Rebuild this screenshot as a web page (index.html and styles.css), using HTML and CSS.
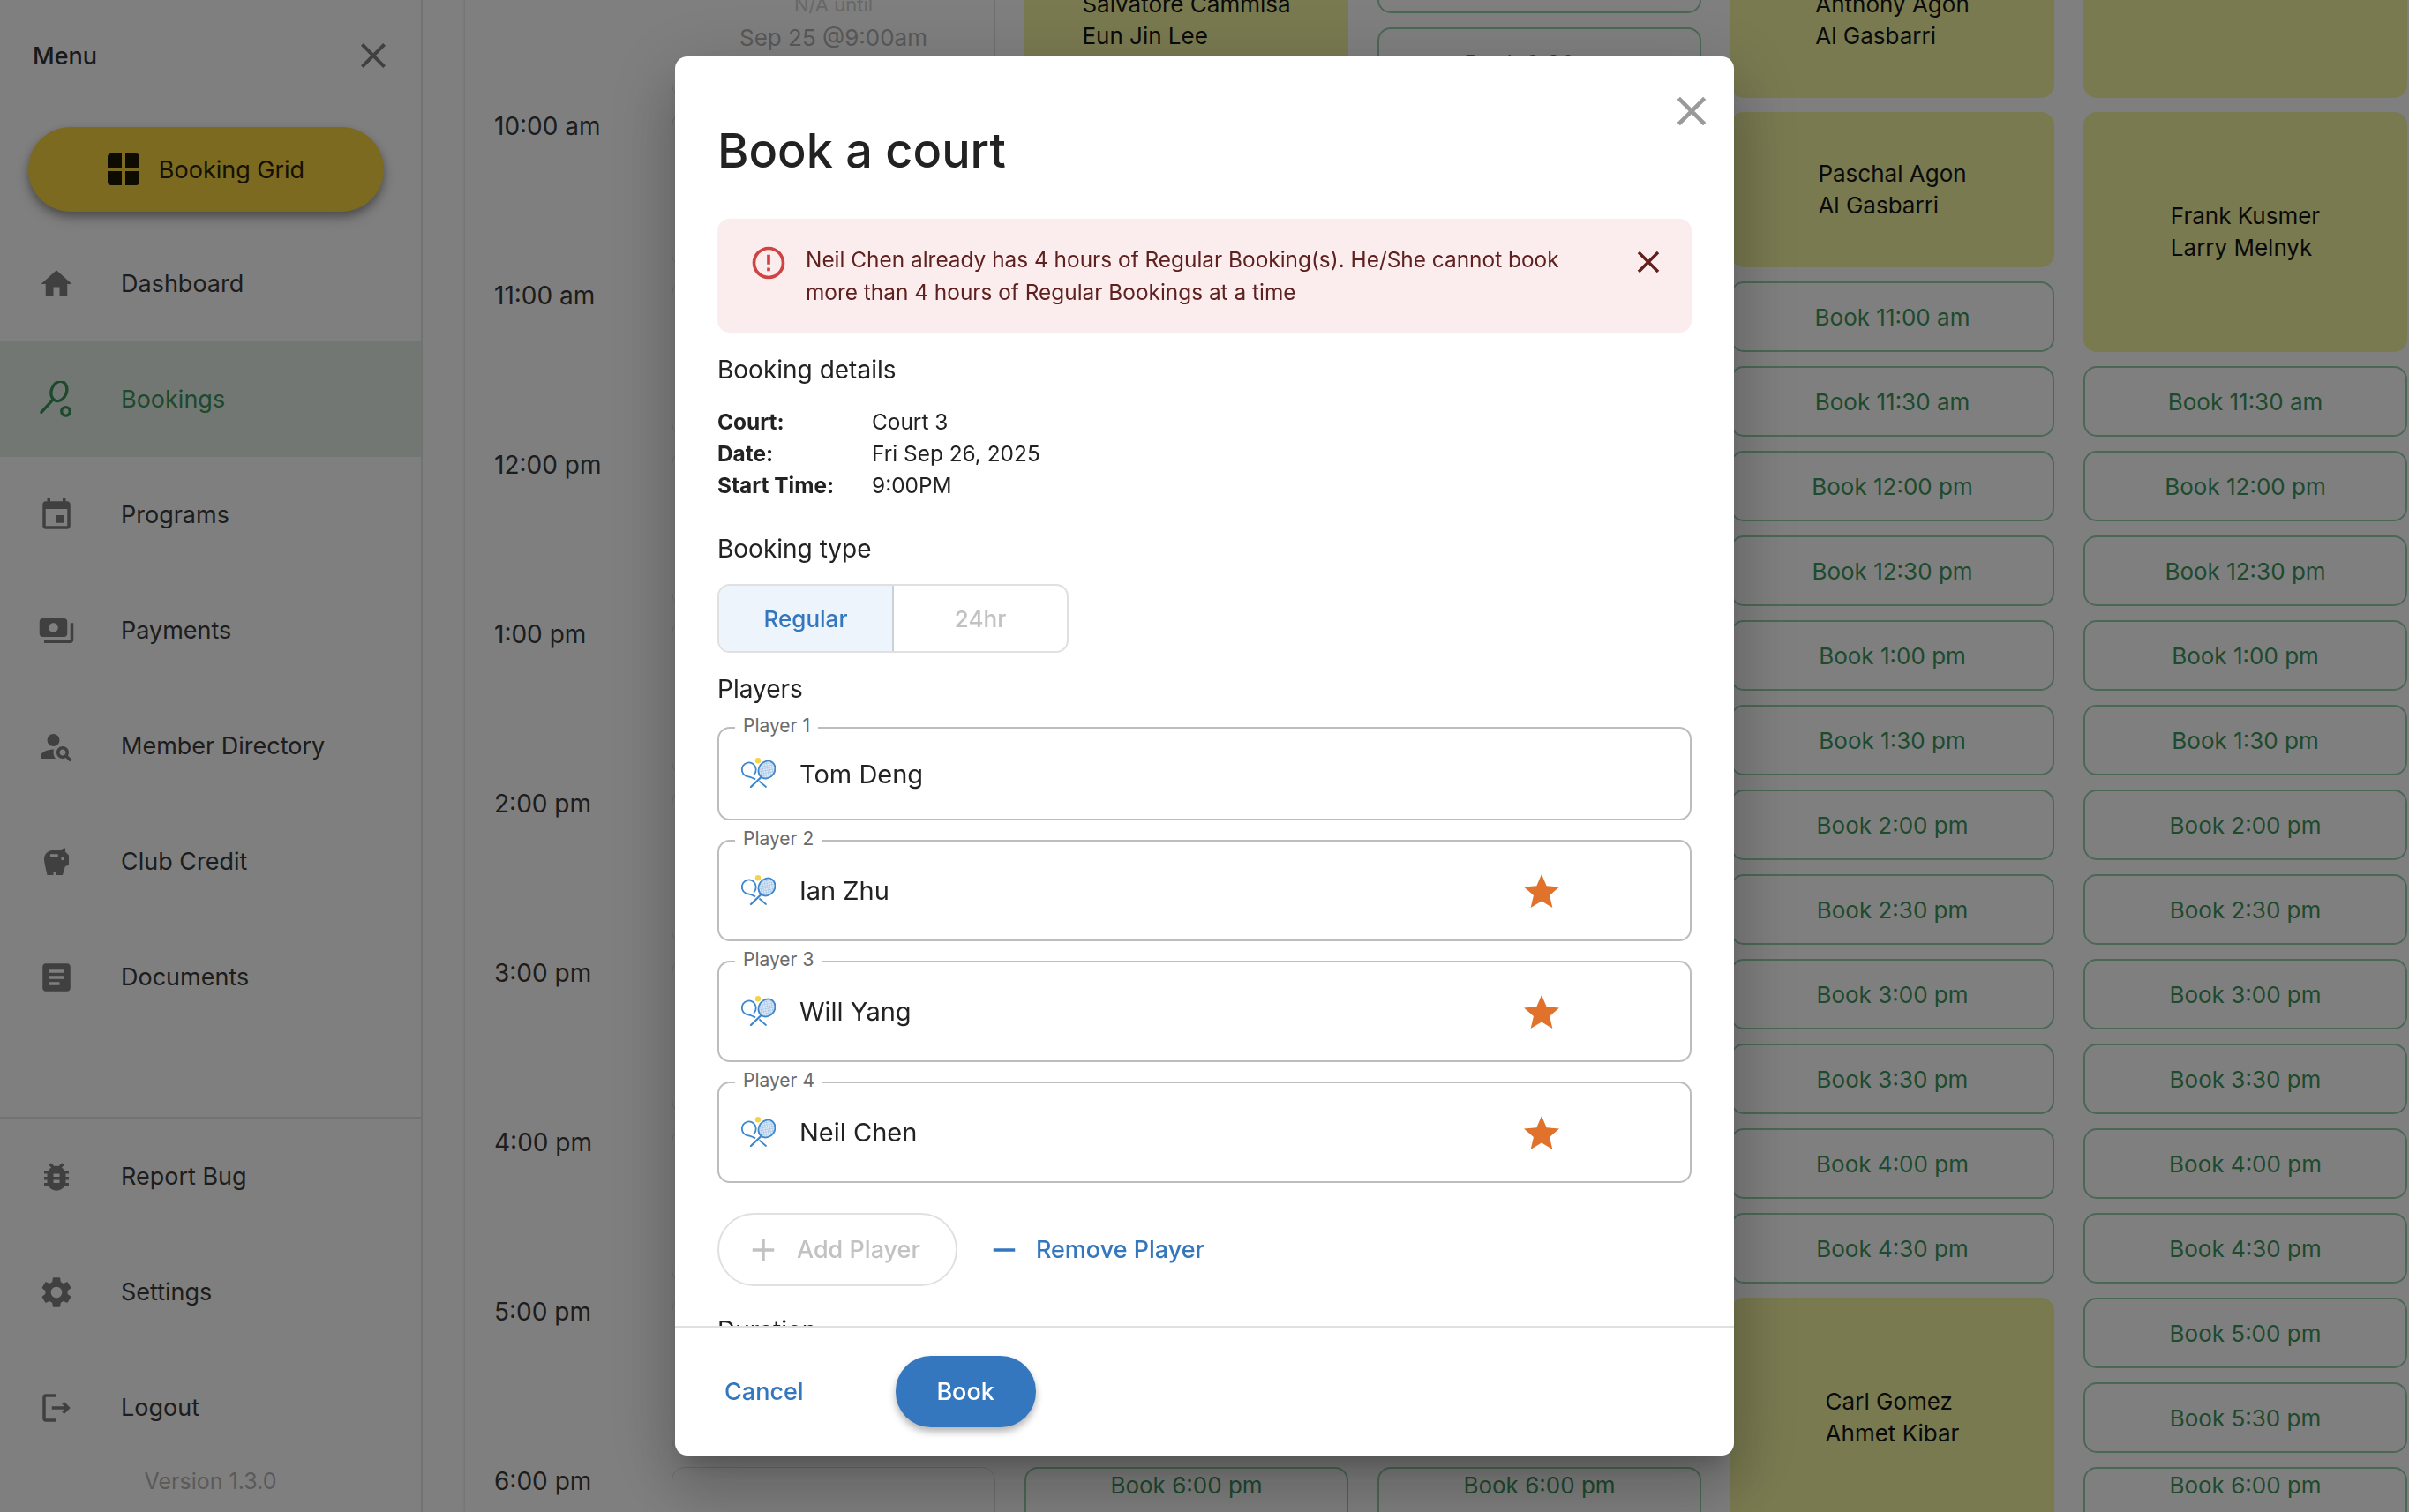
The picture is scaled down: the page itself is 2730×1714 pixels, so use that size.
FILE: index.html
```html
<!DOCTYPE html>
<html lang="en">
  <head>
    <meta charset="utf-8" />
    <title>Book a court</title>
    <link rel="stylesheet" href="styles.css">
  </head>
  <body>
    <div class="page">
      <aside class="sidebar">
        <div class="sidebarHead">
          <span class="menuTitle">Menu</span>
          <svg class="closeIcon" viewBox="0 0 24 24"><path d="M19 6.41 17.59 5 12 10.59 6.41 5 5 6.41 10.59 12 5 17.59 6.41 19 12 13.41 17.59 19 19 17.59 13.41 12z"/></svg>
        </div>
        <a class="gridButton">
          <svg class="gridIcon" viewBox="0 0 36 36"><path d="M4 0h12v16H0V4a4 4 0 0 1 4-4zM20 0h12a4 4 0 0 1 4 4v12H20zM0 20h16v16H4a4 4 0 0 1-4-4zM20 20h16v12a4 4 0 0 1-4 4H20z"/></svg>
          Booking Grid
        </a>
        <nav class="nav">
          <a class="navItem">
            <svg viewBox="0 0 24 24"><path d="M10 20v-6h4v6h5v-8h3L12 3 2 12h3v8z"/></svg>
            Dashboard
          </a>
          <a class="navItem active">
            <svg viewBox="0 0 40 44"><g fill="none" stroke="currentColor" stroke-width="3.5" stroke-linecap="round"><ellipse cx="23" cy="12" rx="9" ry="12" transform="rotate(20 23 12)"/><path d="M15 23 2 37"/><circle cx="31" cy="36" r="5"/></g></svg>
            Bookings
          </a>
          <a class="navItem">
            <svg viewBox="0 0 24 24"><path d="M17 12h-5v5h5v-5zM16 1v2H8V1H6v2H5c-1.11 0-1.99.9-1.99 2L3 19c0 1.1.89 2 2 2h14c1.1 0 2-.9 2-2V5c0-1.1-.9-2-2-2h-1V1h-2zm3 18H5V8h14v11z"/></svg>
            Programs
          </a>
          <a class="navItem">
            <svg viewBox="0 0 24 24"><path d="M19 14V6c0-1.1-.9-2-2-2H3c-1.1 0-2 .9-2 2v8c0 1.1.9 2 2 2h14c1.1 0 2-.9 2-2zm-9-1c-1.66 0-3-1.34-3-3s1.34-3 3-3 3 1.34 3 3-1.34 3-3 3zm13-6v11c0 1.1-.9 2-2 2H4v-2h17V7h2z"/></svg>
            Payments
          </a>
          <a class="navItem">
            <svg viewBox="0 0 24 24"><path d="M10 12a4 4 0 1 0 0-8 4 4 0 0 0 0 8zM10.35 14.01C7.62 13.91 2 15.27 2 18v2h9.54c-2.47-2.76-1.23-5.89-1.19-5.99zM19.43 18.02c.36-.59.57-1.28.57-2.02 0-2.21-1.79-4-4-4s-4 1.79-4 4 1.79 4 4 4c.74 0 1.43-.22 2.02-.57L20.59 22 22 20.59c-1.5-1.5-.79-.8-2.57-2.57zM16 18c-1.1 0-2-.9-2-2s.9-2 2-2 2 .9 2 2-.9 2-2 2z"/></svg>
            Member Directory
          </a>
          <a class="navItem">
            <svg viewBox="0 0 24 24"><path d="M19.83 7.5l-2.27-2.27c.07-.42.18-.81.32-1.15.11-.26.04-.56-.15-.75-.19-.19-.48-.26-.74-.15-.99.4-1.96.82-2.27 1.32H9.5C6.46 4.5 4 6.96 4 10c0 2.5 1.37 7.5 2 10.5h4v-2h2v2h4l1.68-5.59 2.32-.77V7.5h-.17zM13 9H8V7h5v2zm3 2c-.55 0-1-.45-1-1s.45-1 1-1 1 .45 1 1-.45 1-1 1z"/></svg>
            Club Credit
          </a>
          <a class="navItem">
            <svg viewBox="0 0 24 24"><path d="M19 3H5c-1.1 0-2 .9-2 2v14c0 1.1.9 2 2 2h14c1.1 0 2-.9 2-2V5c0-1.1-.9-2-2-2zm-5 14H7v-2h7v2zm3-4H7v-2h10v2zm0-4H7V7h10v2z"/></svg>
            Documents
          </a>
        </nav>
        <div class="sidebarFoot">
          <a class="navItem">
            <svg viewBox="0 0 24 24"><path d="M20 8h-2.81c-.45-.78-1.07-1.45-1.82-1.96L17 4.41 15.59 3l-2.17 2.17C12.96 5.06 12.49 5 12 5c-.49 0-.96.06-1.41.17L8.41 3 7 4.41l1.62 1.63C7.88 6.55 7.26 7.22 6.81 8H4v2h2.09c-.05.33-.09.66-.09 1v1H4v2h2v1c0 .34.04.67.09 1H4v2h2.81c1.04 1.79 2.97 3 5.19 3s4.15-1.21 5.19-3H20v-2h-2.09c.05-.33.09-.66.09-1v-1h2v-2h-2v-1c0-.34-.04-.67-.09-1H20V8zm-6 8h-4v-2h4v2zm0-4h-4v-2h4v2z"/></svg>
            Report Bug
          </a>
          <a class="navItem">
            <svg viewBox="0 0 24 24"><path d="M19.14 12.94c.04-.3.06-.61.06-.94 0-.32-.02-.64-.07-.94l2.03-1.58c.18-.14.23-.41.12-.61l-1.92-3.32c-.12-.22-.37-.29-.59-.22l-2.39.96c-.5-.38-1.03-.7-1.62-.94l-.36-2.54c-.04-.24-.24-.41-.48-.41h-3.84c-.24 0-.43.17-.47.41l-.36 2.54c-.59.24-1.13.57-1.62.94l-2.39-.96c-.22-.08-.47 0-.59.22L2.74 8.87c-.12.21-.08.47.12.61l2.03 1.58c-.05.3-.09.63-.09.94s.02.64.07.94l-2.03 1.58c-.18.14-.23.41-.12.61l1.92 3.32c.12.22.37.29.59.22l2.39-.96c.5.38 1.03.7 1.62.94l.36 2.54c.05.24.24.41.48.41h3.84c.24 0 .44-.17.47-.41l.36-2.54c.59-.24 1.13-.56 1.62-.94l2.39.96c.22.08.47 0 .59-.22l1.92-3.32c.12-.22.07-.47-.12-.61l-2.01-1.58zM12 15.6c-1.98 0-3.6-1.62-3.6-3.6s1.62-3.6 3.6-3.6 3.6 1.62 3.6 3.6-1.62 3.6-3.6 3.6z"/></svg>
            Settings
          </a>
          <a class="navItem">
            <svg viewBox="0 0 24 24"><path d="M17 8l-1.41 1.41L17.17 11H9v2h8.17l-1.58 1.58L17 16l4-4-4-4zM5 5h7V3H5c-1.1 0-2 .9-2 2v14c0 1.1.9 2 2 2h7v-2H5V5z"/></svg>
            Logout
          </a>
          <div class="version">Version 1.3.0</div>
        </div>
      </aside>

      <main class="schedule">
        <div class="times">
          <div class="time">9:00 am</div>
          <div class="time">10:00 am</div>
          <div class="time">11:00 am</div>
          <div class="time">12:00 pm</div>
          <div class="time">1:00 pm</div>
          <div class="time">2:00 pm</div>
          <div class="time">3:00 pm</div>
          <div class="time">4:00 pm</div>
          <div class="time">5:00 pm</div>
          <div class="time">6:00 pm</div>
        </div>

        <div class="court">
          <div class="closed span2"><div><span class="closedNote">N/A until</span><br />Sep 25 @9:00am</div></div>
          <div class="closed span2"></div>
          <div class="closed span2"></div>
          <div class="closed span2"></div>
          <div class="closed span2"></div>
          <div class="closed span2"></div>
          <div class="closed span2"></div>
          <div class="closed span2"></div>
          <div class="closed span2"></div>
          <div class="closed span2"></div>
        </div>

        <div class="court">
          <div class="booked span2"><div>Salvatore Cammisa<br />Eun Jin Lee</div></div>
          <div class="covered"></div>
          <a class="slot last">Book 6:00 pm</a>
        </div>

        <div class="court">
          <a class="slot">Book 9:00 am</a>
          <a class="slot">Book 9:30 am</a>
          <div class="covered"></div>
          <a class="slot last">Book 6:00 pm</a>
        </div>

        <div class="court">
          <div class="booked span2"><div>Anthony Agon<br />Al Gasbarri</div></div>
          <div class="booked span2"><div>Paschal Agon<br />Al Gasbarri</div></div>
          <a class="slot">Book 11:00 am</a>
          <a class="slot">Book 11:30 am</a>
          <a class="slot">Book 12:00 pm</a>
          <a class="slot">Book 12:30 pm</a>
          <a class="slot">Book 1:00 pm</a>
          <a class="slot">Book 1:30 pm</a>
          <a class="slot">Book 2:00 pm</a>
          <a class="slot">Book 2:30 pm</a>
          <a class="slot">Book 3:00 pm</a>
          <a class="slot">Book 3:30 pm</a>
          <a class="slot">Book 4:00 pm</a>
          <a class="slot">Book 4:30 pm</a>
          <div class="booked span3"><div>Carl Gomez<br />Ahmet Kibar</div></div>
        </div>

        <div class="court">
          <div class="booked span2"></div>
          <div class="booked span3"><div>Frank Kusmer<br />Larry Melnyk</div></div>
          <a class="slot">Book 11:30 am</a>
          <a class="slot">Book 12:00 pm</a>
          <a class="slot">Book 12:30 pm</a>
          <a class="slot">Book 1:00 pm</a>
          <a class="slot">Book 1:30 pm</a>
          <a class="slot">Book 2:00 pm</a>
          <a class="slot">Book 2:30 pm</a>
          <a class="slot">Book 3:00 pm</a>
          <a class="slot">Book 3:30 pm</a>
          <a class="slot">Book 4:00 pm</a>
          <a class="slot">Book 4:30 pm</a>
          <a class="slot">Book 5:00 pm</a>
          <a class="slot">Book 5:30 pm</a>
          <a class="slot last">Book 6:00 pm</a>
        </div>
      </main>
    </div>

    <div class="overlay">
      <div class="modal">
        <svg class="modalClose" viewBox="0 0 24 24"><path d="M19 6.41 17.59 5 12 10.59 6.41 5 5 6.41 10.59 12 5 17.59 6.41 19 12 13.41 17.59 19 19 17.59 13.41 12z"/></svg>
        <div class="modalBody">
          <h1>Book a court</h1>

          <div class="alert">
            <svg class="alertIcon" viewBox="0 0 24 24"><path d="M11 15h2v2h-2zm0-8h2v6h-2zm.99-5C6.47 2 2 6.48 2 12s4.47 10 9.99 10C17.52 22 22 17.52 22 12S17.52 2 11.99 2zM12 20c-4.42 0-8-3.58-8-8s3.58-8 8-8 8 3.58 8 8-3.58 8-8 8z"/></svg>
            <p>Neil Chen already has 4 hours of Regular Booking(s). He/She cannot book more than 4 hours of Regular Bookings at a time</p>
            <svg class="alertClose" viewBox="0 0 24 24"><path d="M19 6.41 17.59 5 12 10.59 6.41 5 5 6.41 10.59 12 5 17.59 6.41 19 12 13.41 17.59 19 19 17.59 13.41 12z"/></svg>
          </div>

          <h2 class="detailsHead">Booking details</h2>
          <dl class="details">
            <dt>Court:</dt><dd>Court 3</dd>
            <dt>Date:</dt><dd>Fri Sep 26, 2025</dd>
            <dt>Start Time:</dt><dd>9:00PM</dd>
          </dl>

          <h2 class="typeHead">Booking type</h2>
          <div class="toggle">
            <span class="toggleItem selected">Regular</span>
            <span class="toggleItem">24hr</span>
          </div>

          <h2 class="playersHead">Players</h2>
          <div class="players">
            <div class="player first">
              <span class="playerLabel">Player 1</span>
              <svg class="racketIcon" viewBox="0 0 40 36"><use href="#rackets" /></svg>
              <span class="playerName">Tom Deng</span>
            </div>
            <div class="player">
              <span class="playerLabel">Player 2</span>
              <svg class="racketIcon" viewBox="0 0 40 36"><use href="#rackets" /></svg>
              <span class="playerName">Ian Zhu</span>
              <svg class="star" viewBox="2 2 20 19"><path d="M12 17.27 18.18 21l-1.64-7.03L22 9.24l-7.19-.61L12 2 9.19 8.63 2 9.24l5.46 4.73L5.82 21z"/></svg>
            </div>
            <div class="player">
              <span class="playerLabel">Player 3</span>
              <svg class="racketIcon" viewBox="0 0 40 36"><use href="#rackets" /></svg>
              <span class="playerName">Will Yang</span>
              <svg class="star" viewBox="2 2 20 19"><path d="M12 17.27 18.18 21l-1.64-7.03L22 9.24l-7.19-.61L12 2 9.19 8.63 2 9.24l5.46 4.73L5.82 21z"/></svg>
            </div>
            <div class="player">
              <span class="playerLabel">Player 4</span>
              <svg class="racketIcon" viewBox="0 0 40 36"><use href="#rackets" /></svg>
              <span class="playerName">Neil Chen</span>
              <svg class="star" viewBox="2 2 20 19"><path d="M12 17.27 18.18 21l-1.64-7.03L22 9.24l-7.19-.61L12 2 9.19 8.63 2 9.24l5.46 4.73L5.82 21z"/></svg>
            </div>
          </div>

          <div class="playerActions">
            <span class="addPlayer">
              <svg viewBox="0 0 24 24"><path d="M19 13h-6v6h-2v-6H5v-2h6V5h2v6h6v2z"/></svg>
              Add Player
            </span>
            <span class="removePlayer">
              <svg viewBox="0 0 24 24"><path d="M19 13H5v-2h14v2z"/></svg>
              Remove Player
            </span>
          </div>

          <h2 class="durationHead">Duration</h2>
        </div>
        <div class="modalFoot">
          <a class="cancel">Cancel</a>
          <a class="book">Book</a>
        </div>
      </div>
    </div>

    <svg class="defs" width="0" height="0">
      <defs>
        <pattern id="mesh" width="2.6" height="2.6" patternUnits="userSpaceOnUse" patternTransform="rotate(45)">
          <rect width="2.6" height="2.6" fill="#dbe8f5" />
          <path d="M0 0h2.6M0 0v2.6" stroke="#8db6df" stroke-width=".8" />
        </pattern>
        <g id="rackets">
          <path d="M22 27l7 6M15.500 19A8 8 0 1 0 6 20.500" fill="none" stroke="#3f87cc" stroke-width="1.800" stroke-linecap="round" />
          <path d="M6 20.500C10 21.500 14 22 17 24.500" fill="none" stroke="#3f87cc" stroke-width="1.800" />
          <ellipse cx="30" cy="13.500" rx="9" ry="10.500" transform="rotate(35 30 13.500)" fill="url(#mesh)" stroke="#3f87cc" stroke-width="1.800" />
          <path d="M23.500 22 12 33" fill="none" stroke="#3f87cc" stroke-width="2.400" stroke-linecap="round" />
          <circle cx="20" cy="3.300" r="3.200" fill="#f5d24a" />
        </g>
      </defs>
    </svg>
  </body>
</html>
```

FILE: styles.css
```css
html,
body {
  margin: 0px;
  height: 100%;
  overflow: hidden;
  background-color: #ffffff;
  font-family: "Inter", "Noto Sans", sans-serif;
  color: #333333;
}
a {
  text-decoration: none;
}
h1,
h2,
p,
dl,
dd {
  margin: 0px;
}
.defs {
  display: block;
  height: 0px;
}
.page {
  display: flex;
  height: 1714px;
}

/* sidebar */
.sidebar {
  width: 477px;
  flex: none;
  display: flex;
  flex-direction: column;
  border-right: 2px solid #e4e4e4;
  font-size: 27px;
}
.sidebarHead {
  height: 126px;
  flex: none;
  display: flex;
  align-items: center;
  justify-content: space-between;
  padding: 0px 30px 0px 37px;
}
.menuTitle {
  font-weight: 500;
}
.closeIcon {
  width: 48px;
  height: 48px;
  fill: #808080;
}
.gridButton {
  width: 403px;
  height: 96px;
  flex: none;
  margin: 18px 0px 16px 32px;
  display: flex;
  align-items: center;
  justify-content: center;
  gap: 22px;
  border-radius: 48px;
  background-color: #f6d440;
  color: #2a2204;
  box-shadow: 0px 5px 10px rgba(0, 0, 0, 0.3), 0px 8px 18px rgba(0, 0, 0, 0.16);
}
.gridIcon {
  width: 36px;
  height: 36px;
  fill: #1c1600;
}
.navItem {
  height: 131px;
  display: flex;
  align-items: center;
  gap: 52px;
  padding-left: 43px;
  color: #3a3a3a;
}
.navItem svg {
  width: 42px;
  height: 42px;
  flex: none;
  fill: #808080;
}
.navItem.active {
  background-color: #e7efe8;
  color: #3a9458;
}
.navItem.active svg {
  fill: none;
  color: #3a9458;
}
.sidebarFoot {
  margin-top: auto;
  border-top: 2px solid #e4e4e4;
  padding-bottom: 17px;
}
.version {
  height: 36px;
  line-height: 36px;
  text-align: center;
  font-size: 25px;
  color: #b4b4b4;
}

/* schedule */
.schedule {
  flex: 1;
  display: flex;
  gap: 33px;
  margin-top: -65px;
  padding-left: 33px;
  border-left: 0px;
  margin-left: 48px;
  box-shadow: -1px 0px 3px rgba(0, 0, 0, 0.12);
  font-size: 26px;
}
.times {
  width: 168px;
  flex: none;
  display: grid;
  grid-auto-rows: 80px;
  row-gap: 16px;
}
.time {
  grid-row: span 2;
  line-height: 32px;
  font-size: 28px;
  color: #3a3a3a;
}
.court {
  width: 367px;
  flex: none;
  display: grid;
  grid-auto-rows: 80px;
  row-gap: 16px;
}
.span2 {
  grid-row: span 2;
}
.span3 {
  grid-row: span 3;
}
.covered {
  grid-row: span 16;
}
.slot,
.booked,
.closed {
  display: flex;
  align-items: center;
  justify-content: center;
  border-radius: 15px;
  box-sizing: border-box;
}
.slot {
  border: 2px solid #97d0ac;
  color: #3c945c;
}
.slot.last {
  height: 120px;
  align-items: flex-start;
  padding-top: 1px;
  line-height: 36px;
}
.booked {
  background-color: #f2f4a0;
  color: #141414;
  line-height: 36px;
}
.closed {
  border: 1px solid #dedede;
  color: #b2b2b2;
  line-height: 38px;
  text-align: center;
}
.closedNote {
  font-size: 22px;
  color: #d0d0d0;
}

/* modal */
.overlay {
  position: fixed;
  top: 0px;
  left: 0px;
  right: 0px;
  bottom: 0px;
  display: flex;
  align-items: center;
  justify-content: center;
  background-color: rgba(0, 0, 0, 0.5);
}
.modal {
  position: relative;
  width: 1200px;
  height: 1586px;
  display: flex;
  flex-direction: column;
  overflow: hidden;
  border-radius: 14px;
  background-color: #ffffff;
  color: #222222;
  box-shadow: 0px 19px 26px -12px rgba(0, 0, 0, 0.2),
    0px 42px 66px 5px rgba(0, 0, 0, 0.14),
    0px 16px 80px 14px rgba(0, 0, 0, 0.12);
}
.modalClose {
  position: absolute;
  top: 34px;
  right: 20px;
  width: 56px;
  height: 56px;
  fill: #9a9a9a;
}
.modalBody {
  height: 1439px;
  flex: none;
  overflow: hidden;
  box-sizing: border-box;
  padding: 74px 48px 0px 48px;
}
h1 {
  font-size: 54px;
  line-height: 66px;
  font-weight: 500;
}
h2 {
  font-size: 28px;
  line-height: 40px;
  font-weight: 400;
}
.alert {
  margin-top: 44px;
  display: flex;
  align-items: flex-start;
  padding: 28px 28px 27px 36px;
  border-radius: 14px;
  background-color: #fbeded;
  color: #5f2120;
  font-size: 24.4px;
  line-height: 37px;
}
.alert p {
  width: 880px;
}
.alertIcon {
  width: 44px;
  height: 44px;
  flex: none;
  margin-right: 20px;
  fill: #d14343;
}
.alertClose {
  width: 42px;
  height: 42px;
  flex: none;
  margin-left: auto;
  fill: #5f2120;
}
.detailsHead {
  margin-top: 22px;
}
.details {
  margin-top: 21px;
  display: grid;
  grid-template-columns: 175px 1fr;
  font-size: 24.4px;
  line-height: 36px;
}
.details dt {
  font-weight: 700;
}
.typeHead {
  margin-top: 34px;
}
.toggle {
  margin-top: 20px;
  width: 398px;
  height: 78px;
  display: flex;
  box-sizing: border-box;
  border: 2px solid #e0e0e0;
  border-radius: 14px;
  overflow: hidden;
  font-size: 26px;
  font-weight: 500;
}
.toggleItem {
  flex: 1;
  display: flex;
  align-items: center;
  justify-content: center;
  color: #c2c2c2;
}
.toggleItem.selected {
  background-color: #edf4fb;
  border-right: 2px solid #c9d2dc;
  color: #3477be;
}
.playersHead {
  margin-top: 21px;
}
.players {
  margin-top: 23px;
  display: flex;
  flex-direction: column;
  gap: 22px;
}
.player {
  position: relative;
  height: 115px;
  display: flex;
  align-items: center;
  box-sizing: border-box;
  border: 2px solid #bdbdbd;
  border-radius: 14px;
  padding-left: 24px;
}
.player.first {
  height: 106px;
}
.playerLabel {
  position: absolute;
  top: -16px;
  left: 18px;
  padding: 0px 9px;
  background-color: #ffffff;
  font-size: 21px;
  line-height: 26px;
  color: #6b6b6b;
}
.racketIcon {
  width: 40px;
  height: 36px;
  flex: none;
  margin-right: 27px;
}
.playerName {
  flex: 1;
  font-size: 29px;
}
.star {
  width: 40px;
  height: 38px;
  flex: none;
  margin-right: 148px;
  fill: #e0722b;
}
.playerActions {
  margin-top: 34px;
  display: flex;
  align-items: center;
  gap: 32px;
  font-size: 27px;
  font-weight: 500;
}
.playerActions svg {
  width: 42px;
  height: 42px;
  flex: none;
}
.addPlayer {
  height: 83px;
  display: flex;
  align-items: center;
  gap: 17px;
  box-sizing: border-box;
  border: 2px solid #e0e0e0;
  border-radius: 42px;
  padding: 0px 40px 0px 29px;
  color: #c2c2c2;
}
.addPlayer svg {
  fill: #c2c2c2;
}
.removePlayer {
  display: flex;
  align-items: center;
  gap: 15px;
  color: #3477be;
}
.removePlayer svg {
  fill: #3477be;
}
.durationHead {
  margin-top: 30px;
}
.modalFoot {
  flex: 1;
  display: flex;
  align-items: center;
  gap: 104px;
  border-top: 2px solid #e0e0e0;
  padding-left: 56px;
  font-size: 27px;
  font-weight: 500;
}
.cancel {
  color: #3477be;
}
.book {
  width: 159px;
  height: 81px;
  display: flex;
  align-items: center;
  justify-content: center;
  border-radius: 40px;
  background-color: #3477be;
  color: #ffffff;
  box-shadow: 0px 5px 8px rgba(0, 0, 0, 0.3);
}
```
